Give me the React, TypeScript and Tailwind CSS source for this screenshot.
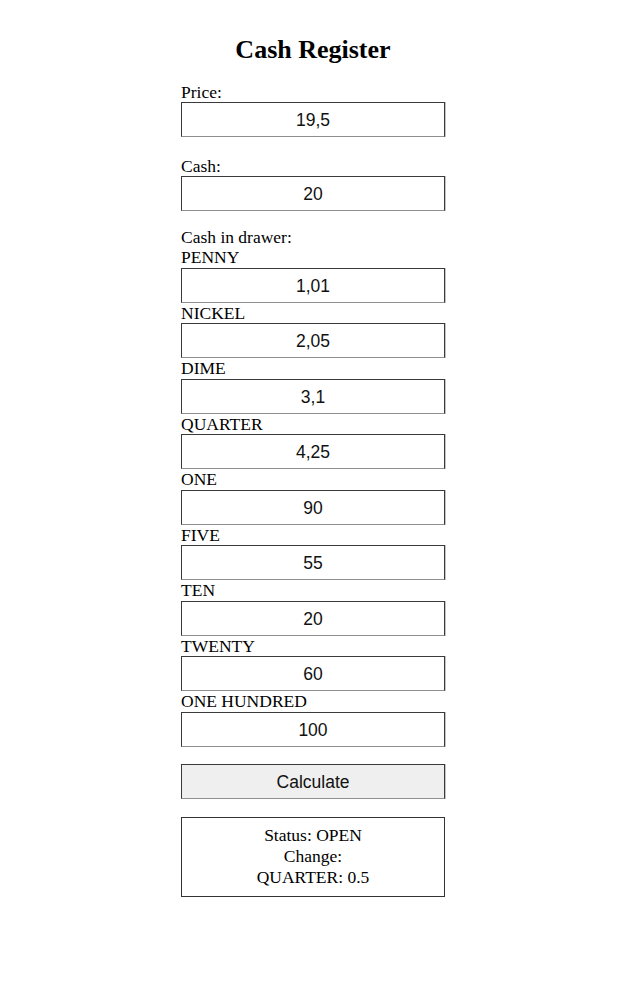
import React from "react";

const denoms: [string, string][] = [
  ["PENNY", "1,01"],
  ["NICKEL", "2,05"],
  ["DIME", "3,1"],
  ["QUARTER", "4,25"],
  ["ONE", "90"],
  ["FIVE", "55"],
  ["TEN", "20"],
  ["TWENTY", "60"],
  ["ONE HUNDRED", "100"],
];

function Field({ value }: { value: string }) {
  return (
    <div className="h-[35px] w-full pt-[2px] border border-[#3a3a3a] border-b-[#8f8f8f] shadow-[1px_0_0_#c4c4c4] bg-white flex items-center justify-center font-['Liberation_Sans',Arial,sans-serif] text-[17.5px] text-[#111]">
      {value}
    </div>
  );
}

export default function App() {
  return (
    <div className="min-h-[1000px] bg-white">
      <div className="w-[264px] mx-auto font-['Liberation_Serif','Times_New_Roman',serif] text-[17.5px] text-black">
        <h1 className="text-[26px] font-bold text-center leading-[30px] pt-[35px] pb-[17px]">
          Cash Register
        </h1>
        <div className="leading-[20px]">Price:</div>
        <Field value="19,5" />
        <div className="leading-[20px] mt-[19px]">Cash:</div>
        <Field value="20" />
        <div className="leading-[20px] mt-[16px]">Cash in drawer:</div>
        {denoms.map(([name, val]) => (
          <div key={name}>
            <div className="leading-[20.5px]">{name}</div>
            <Field value={val} />
          </div>
        ))}
        <div className="mt-[17px] h-[35px] w-full pt-[2px] border border-[#3a3a3a] border-b-[#8f8f8f] shadow-[1px_0_0_#c4c4c4] bg-[#efefef] flex items-center justify-center font-['Liberation_Sans',Arial,sans-serif] text-[17.5px] text-[#111]">
          Calculate
        </div>
        <div className="mt-[18px] border border-[#333] py-[7.5px] text-center leading-[21px]">
          <div>Status: OPEN</div>
          <div>Change:</div>
          <div>QUARTER: 0.5</div>
        </div>
      </div>
    </div>
  );
}
